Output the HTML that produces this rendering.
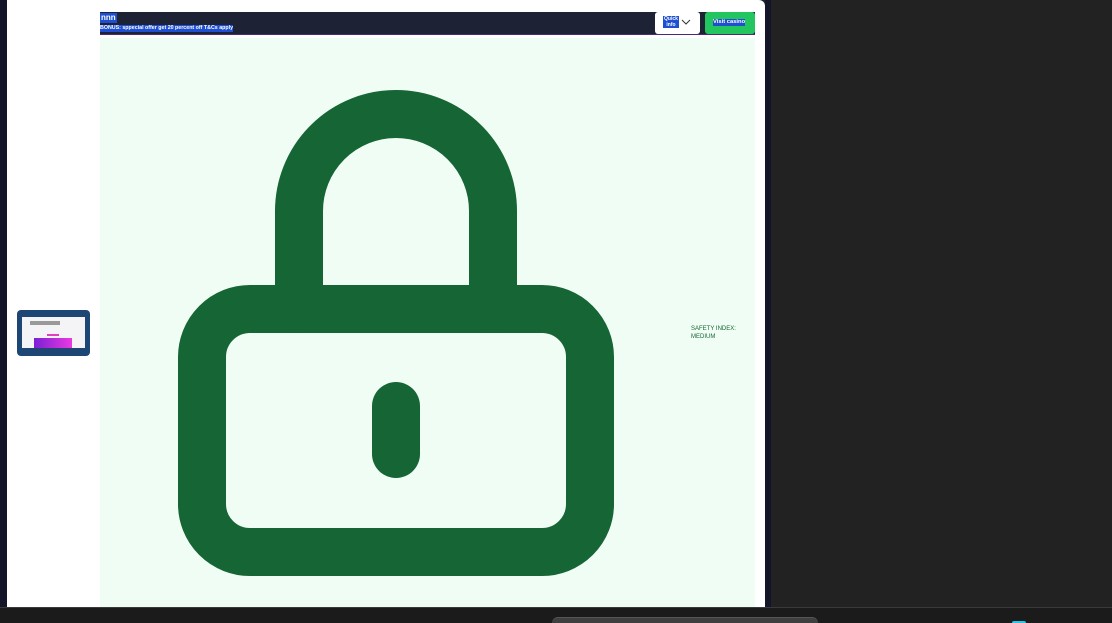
<!DOCTYPE html>
<html><head><meta charset="utf-8"><style>
*{margin:0;padding:0;box-sizing:border-box}
html,body{width:1112px;height:623px;overflow:hidden}
body{background:#222;font-family:"Liberation Sans",sans-serif;position:relative}
.a{position:absolute}
.sel{background:#1d4fd0;color:#fff}
</style></head><body>
<div class="a" style="left:0;top:0;width:7px;height:607px;background:#15152a"></div>
<div class="a" style="left:7px;top:0;width:758px;height:607px;background:#fff;border-radius:0 6px 0 0"></div>
<div class="a" style="left:765px;top:0;width:6px;height:607px;background:#15152a"></div>
<div class="a" style="left:0;top:607px;width:1112px;height:16px;background:#1b1b1b;border-top:1px solid #3a3a3a"></div>
<div class="a" style="left:552px;top:617px;width:266px;height:6px;background:#3f3f3f;border-radius:10px 10px 0 0;border-top:1px solid #555"></div>
<div class="a" style="left:1012px;top:621px;width:14px;height:2px;background:#29c5e6;border-radius:3px 3px 0 0"></div>

<div class="a" style="left:100px;top:12px;width:655px;height:23px;background:#1e2235;border-bottom:1px solid #4a2a7a"></div>
<div class="a sel" style="left:100px;top:13px;font-size:8px;font-weight:bold;line-height:10px;padding:0 1px">nnn</div>
<div class="a sel" style="left:100px;top:25px;font-size:5.3px;font-weight:bold;line-height:7px">BONUS: sppecial offer get 20 percent off T&amp;Cs apply</div>
<div class="a" style="left:655px;top:12px;width:45px;height:22px;background:#fff;border-radius:3px"></div>
<div class="a sel" style="left:663px;top:16px;font-size:5px;font-weight:bold;line-height:6px;text-align:center;width:16px">Quick<br>info</div>
<svg class="a" style="left:681px;top:18px" width="10" height="8" viewBox="0 0 10 8"><path d="M1 2l4 4 4-4" fill="none" stroke="#333" stroke-width="1"/></svg>
<div class="a" style="left:705px;top:12px;width:50px;height:22px;background:#22c55e;border-radius:3px"></div>
<div class="a sel" style="left:713px;top:19px;font-size:5.8px;font-weight:bold;line-height:7px">Visit casino</div>

<div class="a" style="left:100px;top:38px;width:655px;height:569px;background:#f0fdf4"></div>
<svg class="a" style="left:0;top:0" width="765" height="607">
<g fill="none" stroke="#166534" stroke-width="48" stroke-linecap="round" stroke-linejoin="round">
<rect x="202" y="309" width="388" height="243" rx="48"/>
<path d="M299 309V211a97 97 0 0 1 194 0v98"/>
<path d="M396 406v48"/>
</g></svg>
<div class="a" style="left:17px;top:310px;width:73px;height:46px;background:#1e4675;border-radius:4px"></div>
<div class="a" style="left:22px;top:317px;width:63px;height:31px;background:#f4f4f6"></div>
<div class="a" style="left:30px;top:321px;width:30px;height:4px;background:#999"></div>
<div class="a" style="left:47px;top:334px;width:12px;height:2px;background:#e040c0"></div>
<div class="a" style="left:34px;top:338px;width:38px;height:10px;background:linear-gradient(90deg,#7b1fd6,#e83ae0)"></div>
<div class="a" style="left:691px;top:325px;font-size:6px;color:#166534;line-height:8px">SAFETY INDEX:<br>MEDIUM</div>
</body></html>
